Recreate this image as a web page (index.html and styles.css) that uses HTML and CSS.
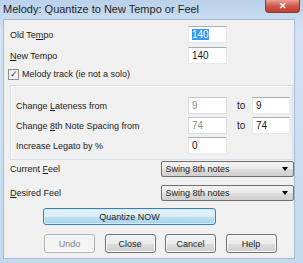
FILE: index.html
```html
<!DOCTYPE html>
<html lang="en">
<head>
<meta charset="UTF-8">
<title>Melody: Quantize to New Tempo or Feel</title>
<link rel="stylesheet" href="styles.css">
</head>
<body>
<div class="window">
  <div class="titlebar">
    <span class="title">Melody: Quantize to New Tempo or Feel</span>
    <span class="close">&#x2715;</span>
  </div>
  <div class="client">
    <div class="row">
      <label class="lbl">Old Te<u>m</u>po</label>
      <span class="field sel"><span class="hl">140</span></span>
    </div>
    <div class="row r2">
      <label class="lbl"><u>N</u>ew Tempo</label>
      <span class="field">140</span>
    </div>
    <div class="check">
      <span class="box">&#x2713;</span>
      <span>Melody track (ie not a solo)</span>
    </div>

    <div class="panel">
      <div class="prow">
        <label class="plbl">Change <u>L</u>ateness from</label>
        <span class="field off">9</span>
        <span class="to">to</span>
        <span class="field wide">9</span>
      </div>
      <div class="prow">
        <label class="plbl">Change <u>8</u>th Note Spacing from</label>
        <span class="field off">74</span>
        <span class="to">to</span>
        <span class="field wide">74</span>
      </div>
      <div class="prow">
        <label class="plbl">Increase Legato by %</label>
        <span class="field">0</span>
      </div>
    </div>

    <div class="frow">
      <label class="flbl">Current <u>F</u>eel</label>
      <span class="combo">Swing 8th notes<i class="arrow"></i></span>
    </div>
    <div class="frow f2">
      <label class="flbl"><u>D</u>esired Feel</label>
      <span class="combo">Swing 8th notes<i class="arrow"></i></span>
    </div>

    <button class="btn default">Quantize NOW</button>

    <div class="buttons">
      <button class="btn off">Undo</button>
      <button class="btn">Close</button>
      <button class="btn">Cancel</button>
      <button class="btn">Help</button>
    </div>
  </div>
</div>
</body>
</html>
```

FILE: styles.css
```css
body {
  margin: 0;
  font-family: "Liberation Sans", Arial, sans-serif;
  font-size: 9px;
  color: #1a1a1a;
}
u { text-decoration: underline; }

.window {
  width: 303px;
  height: 263px;
  background: linear-gradient(#b9d1ea, #d3e3f4 30px, #c4d9ef);
  display: flex;
  flex-direction: column;
  overflow: hidden;
}
.titlebar {
  height: 19px;
  position: relative;
}
.title {
  position: absolute;
  left: 3px;
  top: 3px;
  font-size: 11px;
  color: #1e1e1e;
}
.close {
  position: absolute;
  left: 265px;
  top: 0;
  width: 35px;
  height: 13px;
  border: 1px solid #8a3a35;
  border-top: 0;
  border-radius: 0 0 4px 4px;
  box-sizing: border-box;
  background: linear-gradient(#e8a093, #d0574a 50%, #c23d2f);
  color: #fff;
  font-size: 9px;
  font-weight: bold;
  text-align: center;
  line-height: 12px;
}

.client {
  margin-left: 3px;
  width: 292px;
  height: 240px;
  box-sizing: border-box;
  background: #f0f0f0;
  border: 1px solid #a6b9cf;
  padding-top: 6px;
}

.row {
  display: flex;
  align-items: center;
  height: 17px;
}
.row.r2 { margin-top: 4px; }
.lbl {
  width: 178px;
  padding-left: 6px;
}

.field {
  box-sizing: border-box;
  width: 39px;
  height: 17px;
  background: #fff;
  border: 1px solid #e3e9ef;
  border-top-color: #abadb3;
  padding: 0 3px;
  line-height: 15px;
  font-size: 10px;
}
.field.off {
  color: #8d8d8d;
  border-color: #d9dde2;
  border-top-color: #c3c5c9;
}
.field.wide { width: 38px; }
.hl {
  background: #3399ff;
  color: #fff;
}

.check {
  display: flex;
  align-items: center;
  height: 16px;
  margin-top: 2px;
  padding-left: 4px;
}
.box {
  box-sizing: border-box;
  width: 11px;
  height: 11px;
  border: 1px solid #8e8f8f;
  background: linear-gradient(#e9e9e9, #f8f8f8);
  color: #233c75;
  font-size: 9px;
  line-height: 9px;
  text-align: center;
  margin-right: 3px;
}

.panel {
  margin: 3px 0 0 6px;
  width: 283px;
  height: 75px;
  box-sizing: border-box;
  border: 1px solid #d5dfe5;
  box-shadow: inset 1px 1px 0 #fff;
  padding: 11px 0 0 5px;
}
.prow {
  display: flex;
  align-items: center;
  height: 17px;
  margin-bottom: 3px;
}
.plbl { width: 172px; }
.to {
  width: 25px;
  padding-left: 10px;
  box-sizing: border-box;
  font-size: 10px;
}

.frow {
  display: flex;
  align-items: center;
  height: 16px;
  margin-top: 1px;
}
.frow.f2 { margin-top: 8px; }
.flbl {
  width: 153px;
  padding-left: 6px;
}
.combo {
  position: relative;
  box-sizing: border-box;
  width: 134px;
  height: 16px;
  border: 1px solid #707070;
  border-radius: 2px;
  background: linear-gradient(#f2f2f2, #ebebeb 50%, #dddddd 51%, #cfcfcf);
  padding-left: 3px;
  line-height: 14px;
}
.arrow {
  position: absolute;
  right: 5px;
  top: 5px;
  border-left: 3px solid transparent;
  border-right: 3px solid transparent;
  border-top: 4px solid #000;
}

.btn {
  font-family: inherit;
  font-size: 9px;
  color: #1a1a1a;
  box-sizing: border-box;
  border: 1px solid #707070;
  border-radius: 3px;
  background: linear-gradient(#f2f2f2, #ebebeb 50%, #dddddd 51%, #cfcfcf);
  box-shadow: inset 0 0 0 1px #fbfbfb;
  padding: 0;
}
.btn.default {
  display: block;
  margin: 7px 0 0 39px;
  width: 173px;
  height: 17px;
  border-color: #3c7fb1;
  background: linear-gradient(#e5f2fa, #d9ecf8 50%, #bee0f4 51%, #a7d2ee);
  box-shadow: inset 0 0 0 1px #d1ebfa;
}
.buttons {
  display: flex;
  gap: 9.5px;
  margin: 9px 0 0 40px;
}
.buttons .btn {
  width: 51px;
  height: 19px;
}
.btn.off {
  color: #838383;
  border-color: #adb2b5;
  background: #f4f4f4;
}
```
